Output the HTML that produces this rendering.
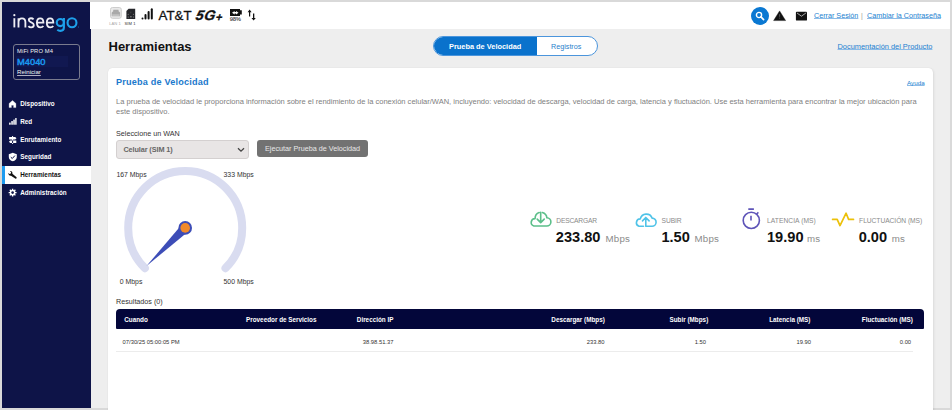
<!DOCTYPE html>
<html><head><meta charset="utf-8">
<style>
*{margin:0;padding:0;box-sizing:border-box}
html,body{width:952px;height:410px;overflow:hidden}
body{background:#d9d9d9;font-family:"Liberation Sans",sans-serif;position:relative}
.a{position:absolute;white-space:nowrap}
#frame{position:absolute;left:2px;top:2px;width:948px;height:406px;background:#eeeeee;overflow:hidden}
#side{position:absolute;left:2px;top:2px;width:88.5px;height:406px;background:#0e1448}
#hdr{position:absolute;left:90px;top:2px;width:860px;height:26.5px;background:#fff}
.nt{left:20.2px;color:#fff;font-weight:bold;font-size:6.3px;line-height:9px;letter-spacing:0.05px}
.lnk{color:#1a7fd0;text-decoration:underline;text-decoration-thickness:1px;text-decoration-color:#8cbce8;text-decoration-skip-ink:none;text-underline-offset:0.4px;font-size:7.2px}
#card{position:absolute;left:108px;top:68px;width:825px;height:360px;background:#fff;border-radius:4.5px;box-shadow:0 0 1px rgba(0,0,0,.12),1px 1px 3px rgba(0,0,0,.07)}
.lbl{color:#8a8a8a;font-size:6.7px;letter-spacing:0px}
.val{color:#111;font-weight:bold;font-size:14.6px}
.unit{color:#8a8a8a;font-size:9.7px;letter-spacing:0.25px}
.th{color:#fff;font-weight:bold;font-size:6.35px;line-height:10px}
.td{color:#333;font-size:5.8px;line-height:10px}
</style></head>
<body>
<div id="frame"></div>
<div id="side"></div>
<div id="hdr"></div>

<!-- logo -->
<svg class="a" style="left:0;top:0" width="90" height="40" viewBox="0 0 90 40">
 <g fill="none" stroke="#ededf3" stroke-width="1.85" stroke-linecap="butt">
  <path d="M14.35 18.2V27.4"/>
  <path d="M18.5 27.4V18.2 M18.5 22.3C18.5 19.6 20 18.3 22 18.3C24 18.3 25.4 19.6 25.4 22.3V27.4"/>
  <path d="M33.6 19.3C32.9 18.6 32 18.2 31 18.2C29.6 18.2 28.8 19 28.8 20.1C28.8 22.8 33.8 22 33.8 24.9C33.8 26.3 32.8 27.3 31.1 27.3C30 27.3 29 26.8 28.4 26.1"/>
  <path d="M37 22.6H43.4C43.4 20 42.2 18.3 40.2 18.3C38.2 18.3 36.9 20.1 36.9 22.7C36.9 25.4 38.4 27.3 40.6 27.3C41.8 27.3 42.7 26.8 43.4 26"/>
  <path d="M46.9 22.6H53.3C53.3 20 52.1 18.3 50.1 18.3C48.1 18.3 46.8 20.1 46.8 22.7C46.8 25.4 48.3 27.3 50.5 27.3C51.7 27.3 52.6 26.8 53.3 26"/>
 </g>
 <circle cx="14.35" cy="15.2" r="1.1" fill="#ededf3"/>
 <g fill="none" stroke="#1ea0ea" stroke-width="2.1">
  <circle cx="60.3" cy="22.6" r="3.55"/>
  <path d="M63.9 18.1V27.6C63.9 29.9 62.6 30.9 60.4 30.9C59.1 30.9 58.1 30.5 57.3 29.8"/>
  <circle cx="72" cy="22.75" r="4.45"/>
 </g>
 <circle cx="78.6" cy="27" r="0.45" fill="#1ea0ea"/>
</svg>
<!-- device box -->
<div class="a" style="left:12.5px;top:44.3px;width:67.5px;height:35.4px;border:1.3px solid #7a7b8e;border-radius:3px"></div>
<div class="a" style="left:17.1px;top:47.1px;font-size:5.8px;line-height:8px;color:#f2f2f2;letter-spacing:0.1px">MiFi PRO M4</div>
<div class="a" style="left:16px;top:56.1px;width:51.6px;height:11.3px;background:#111851"></div>
<div class="a" style="left:17.1px;top:55.7px;font-size:9.3px;line-height:12px;color:#1a9af0;letter-spacing:0px;-webkit-text-stroke:0.42px #1a9af0">M4040</div>
<div class="a" style="left:17.1px;top:68.3px;font-size:6.1px;line-height:8px;color:#f2f2f2;text-decoration:underline;text-decoration-color:#b0b0c0;text-decoration-thickness:0.6px;text-underline-offset:1px">Reiniciar</div>

<!-- nav -->
<div class="a" style="left:2px;top:165.7px;width:88.5px;height:17.9px;background:#fff"></div>
<div class="a" style="left:2px;top:165.7px;width:3px;height:17.9px;background:#1e9bf0"></div>
<svg class="a" style="left:0;top:90px" width="22" height="110" viewBox="0 90 22 110">
 <path d="M12.5 100.5L9.1 103.4V107.6H11.4V105.2H13.6V107.6H15.9V103.4Z" fill="#fff" stroke="#fff" stroke-width="0.3" stroke-linejoin="round"/>
 <g fill="#fff"><rect x="9.1" y="122.6" width="1.6" height="2.1" rx="0.5"/><rect x="11.3" y="121" width="1.5" height="3.7" rx="0.5"/><rect x="13.3" y="119.4" width="1.5" height="5.3" rx="0.5"/><rect x="15.2" y="117.9" width="1.4" height="6.8" rx="0.5"/></g>
 <path d="M12.1 135.9H13.1V144H12.1Z M9.1 137H15.2L16.5 138.25L15.2 139.5H9.1Z M16.3 140.5H10.2L8.9 141.75L10.2 143H16.3Z" fill="#fff"/>
 <path d="M12.8 152.7L8.8 154.2V157C8.8 159.1 10.5 160.7 12.8 161.3C15.1 160.7 16.8 159.1 16.8 157V154.2Z" fill="#fff"/>
 <path d="M10.8 157.2L12.3 158.5L14.9 155.6" stroke="#0e1448" stroke-width="1" fill="none"/>
 <path d="M8.3 173.1C8.1 174.6 9.4 176 11 175.7L15.2 178.6C15.7 178.9 16.3 178.8 16.6 178.3C16.9 177.8 16.8 177.3 16.3 176.9L12.4 173.7C12.8 172.1 11.5 170.7 9.9 171L11.2 172.4L10.8 173.6L9.6 173.9Z" fill="#111"/>
 <path d="M16.54 191.91 L16.54 193.29 L15.42 193.28 L15.07 194.12 L15.87 194.90 L14.90 195.87 L14.12 195.07 L13.28 195.42 L13.29 196.54 L11.91 196.54 L11.92 195.42 L11.08 195.07 L10.30 195.87 L9.33 194.90 L10.13 194.12 L9.78 193.28 L8.66 193.29 L8.66 191.91 L9.78 191.92 L10.13 191.08 L9.33 190.30 L10.30 189.33 L11.08 190.13 L11.92 189.78 L11.91 188.66 L13.29 188.66 L13.28 189.78 L14.12 190.13 L14.90 189.33 L15.87 190.30 L15.07 191.08 L15.42 191.92Z" fill="#fff"/>
 <circle cx="12.6" cy="192.6" r="1.3" fill="#0e1448"/>
</svg>
<div class="a nt" style="top:99.2px">Dispositivo</div>
<div class="a nt" style="top:116.9px">Red</div>
<div class="a nt" style="top:134.7px">Enrutamiento</div>
<div class="a nt" style="top:152.4px">Seguridad</div>
<div class="a nt" style="top:170.2px;color:#111">Herramientas</div>
<div class="a nt" style="top:187.9px">Administración</div>

<!-- header status -->
<svg class="a" style="left:100px;top:0" width="170" height="28" viewBox="100 0 170 28">
 <rect x="110.5" y="7.5" width="10.8" height="10.8" rx="2" fill="#e9e9e9" stroke="#cdcdcd" stroke-width="1"/>
 <path d="M111.7 16.3V12.6L113.2 11.3V10.3C113.2 9.9 113.5 9.8 113.8 9.8H118C118.3 9.8 118.6 9.9 118.6 10.3V11.3L120.1 12.6V16.3Z" fill="#a9a9a9"/>
 <rect x="112.2" y="14.7" width="7.4" height="0.7" fill="#e8e8e8"/>
 <path d="M128.6 8.8H135.2V19H126.4V11Z" fill="#25262b"/>
 <circle cx="128.2" cy="14.2" r="0.5" fill="#9a9a9a"/><circle cx="133.4" cy="14.2" r="0.5" fill="#9a9a9a"/>
 <circle cx="128.2" cy="17" r="0.5" fill="#9a9a9a"/><circle cx="133.4" cy="17" r="0.5" fill="#9a9a9a"/>
 <rect x="130.2" y="16.1" width="1.4" height="1.3" fill="#8a8a8a"/>
 <path d="M130.8 11.6V13.4" stroke="#666" stroke-width="0.5"/>
 <g stroke="#111" stroke-width="2" stroke-linecap="round">
  <path d="M142.5 18.6V18.4"/><path d="M145.5 18.6V15"/><path d="M148.6 18.6V12.1"/><path d="M151.8 18.6V9.3"/>
 </g>
 <path d="M230 8.9H240V10.2H241.8V14.4H240V16.1H230Z" fill="#111"/>
 <path d="M232 12.7L234.6 11V12H236V11L238.5 12.7L236 14.4V13.4H234.6V14.4Z" fill="#fff"/>
 <path d="M249.6 9.5L247.6 12.2H249V16.6H250.2V12.2H251.6Z M253.6 20.6L255.8 17.9H254.3V13.5H253V17.9H251.5Z" fill="#111"/>
</svg>
<div class="a" style="left:109.2px;top:20.5px;font-size:4.1px;line-height:5px;color:#a8a8a8;letter-spacing:0.05px">LAN 1</div>
<div class="a" style="left:124.5px;top:20.5px;font-size:4.1px;line-height:5px;color:#333;letter-spacing:0.1px">SIM 1</div>
<div class="a" style="left:158.6px;top:7.5px;font-size:13.3px;line-height:16px;color:#111;-webkit-text-stroke:0.3px #111">AT&amp;T</div>
<div class="a" style="left:194.2px;top:7.3px;font-size:14px;line-height:16px;color:#111;font-weight:bold;font-style:italic;letter-spacing:0.7px;transform:skewX(-13deg);transform-origin:0 100%;-webkit-text-stroke:0.35px #111">5G<span style="font-size:11px;position:relative;top:1.2px;margin-left:0.3px">+</span></div>
<div class="a" style="left:229.8px;top:16px;font-size:5.9px;line-height:7px;color:#555;font-weight:bold;letter-spacing:-0.35px">98%</div>
<!-- header right -->
<div class="a" style="left:751px;top:7px;width:18px;height:18px;border-radius:50%;background:#0a78d2"></div>
<svg class="a" style="left:755px;top:11px" width="10" height="10" viewBox="0 0 10 10"><circle cx="4" cy="4" r="2.6" stroke="#fff" stroke-width="1.4" fill="none"/><path d="M5.9 5.9L8.6 8.6" stroke="#fff" stroke-width="1.6" stroke-linecap="round"/></svg>
<svg class="a" style="left:770px;top:8px" width="42" height="16" viewBox="770 8 42 16"><path d="M779.6 10.9L785.6 20.6H773.6Z" fill="#111" stroke="#111" stroke-width="0.4" stroke-linejoin="round"/><rect x="779.1" y="14.2" width="1" height="2.6" fill="#555"/><rect x="779.1" y="17.6" width="1" height="1" fill="#555"/><rect x="795.9" y="11.8" width="11.1" height="8.8" rx="0.9" fill="#111"/><path d="M797 13L801.45 16.2L805.9 13" stroke="#ccc" stroke-width="0.8" fill="none"/></svg>
<div class="a lnk" style="left:814px;top:11px;line-height:9px">Cerrar Sesión</div>
<div class="a" style="left:861px;top:11px;line-height:9px;font-size:7px;color:#999">|</div>
<div class="a lnk" style="left:867px;top:11px;line-height:9px">Cambiar la Contraseña</div>

<!-- page title -->
<div class="a" style="left:108.5px;top:39px;font-size:13px;line-height:16px;color:#111;font-weight:bold">Herramientas</div>
<!-- tabs -->
<div class="a" style="left:433.2px;top:36.1px;width:164.7px;height:20.2px;border:1px solid #4b95dc;border-radius:10.1px;background:#fff;overflow:hidden">
  <div style="position:absolute;left:-1px;top:-1px;width:104px;height:20.2px;background:#0a72cc"></div>
</div>
<div class="a" style="left:449px;top:41.5px;font-size:7.4px;line-height:9px;color:#fff;font-weight:bold">Prueba de Velocidad</div>
<div class="a" style="left:551px;top:41.5px;font-size:7.2px;line-height:9px;color:#2a7fcc">Registros</div>
<div class="a lnk" style="left:837.5px;top:41.5px;line-height:9px;font-size:7.4px">Documentación del Producto</div>

<!-- card -->
<div id="card"></div>
<div class="a" style="left:116px;top:75.6px;font-size:9.1px;line-height:12px;color:#1a78cc;font-weight:bold;letter-spacing:0.2px">Prueba de Velocidad</div>
<div class="a lnk" style="left:907px;top:78.5px;font-size:6.25px;line-height:7px">Ayuda</div>
<div class="a" style="left:116px;top:96.8px;font-size:7.53px;line-height:10.1px;color:#808080;white-space:normal;width:810px">La prueba de velocidad le proporciona información sobre el rendimiento de la conexión celular/WAN, incluyendo: velocidad de descarga, velocidad de carga, latencia y fluctuación. Use esta herramienta para encontrar la mejor ubicación para este dispositivo.</div>
<div class="a" style="left:116px;top:128.5px;font-size:7.2px;line-height:9px;color:#333">Seleccione un WAN</div>
<div class="a" style="left:116px;top:140px;width:133.4px;height:18.6px;background:#e8e5e5;border:1px solid #d4d0d0;border-radius:3px"></div>
<div class="a" style="left:123.4px;top:144.5px;font-size:7.3px;line-height:9px;color:#666;font-weight:bold;letter-spacing:-0.1px">Celular (SIM 1)</div>
<svg class="a" style="left:237px;top:146.5px" width="8" height="6" viewBox="0 0 8 6"><path d="M1 1.2L4 4.2L7 1.2" stroke="#444" stroke-width="1.3" fill="none"/></svg>
<div class="a" style="left:257.1px;top:139.8px;width:111.4px;height:17.7px;background:#727272;border-radius:3px"></div>
<div class="a" style="left:265px;top:144.2px;font-size:7.23px;line-height:9px;color:#e8e8e8">Ejecutar Prueba de Velocidad</div>

<!-- gauge -->
<svg class="a" style="left:110px;top:160px" width="150" height="130" viewBox="110 160 150 130">
  <path d="M144.9 268.2 A57 57 0 1 1 225.5 268.2" stroke="#d9dcf0" stroke-width="8" fill="none" stroke-linecap="round"/>
  <path d="M146.5 266 L182.3 224 L188.6 231.2 Z" fill="#3d4db7"/>
  <circle cx="185.2" cy="227.9" r="6.8" fill="#3d4db7"/>
  <circle cx="185.2" cy="227.9" r="4.8" fill="#f28a2a"/>
</svg>
<div class="a" style="left:116.4px;top:170px;font-size:6.9px;line-height:9px;color:#333">167 Mbps</div>
<div class="a" style="left:223.5px;top:170px;font-size:6.9px;line-height:9px;color:#333">333 Mbps</div>
<div class="a" style="left:119.8px;top:277px;font-size:6.9px;line-height:9px;color:#333">0 Mbps</div>
<div class="a" style="left:223.5px;top:277px;font-size:6.9px;line-height:9px;color:#333">500 Mbps</div>

<!-- stats -->
<svg class="a" style="left:520px;top:200px" width="40" height="35" viewBox="520 200 40 35"><path d="M542.4 212.5A6.2 6.2 0 0 1 546.9 217.8A4.1 4.1 0 0 1 546.7 226H533.8A3.8 3.8 0 0 1 535.1 218.6A6.2 6.2 0 0 1 539.2 212.6" stroke="#5cbf8a" stroke-width="1.6" fill="none" stroke-linecap="round" stroke-linejoin="round"/><path d="M540.7 212.3V222.3 M537.2 219.1L540.7 222.6L544.2 219.1" stroke="#5cbf8a" stroke-width="1.6" fill="none" stroke-linecap="round" stroke-linejoin="round"/></svg>
<div class="a lbl" style="left:556.3px;top:216px;line-height:9px;letter-spacing:-0.2px">DESCARGAR</div>
<div class="a val" style="left:555.8px;top:228px;line-height:18px">233.80</div>
<div class="a unit" style="left:605.5px;top:232px;line-height:14px">Mbps</div>
<svg class="a" style="left:625px;top:200px" width="40" height="35" viewBox="625 200 40 35"><path d="M643.5 226.3H639A3.8 3.8 0 0 1 640.3 218.9A6.2 6.2 0 0 1 652.1 218.1A4.1 4.1 0 0 1 651.9 226.3H646.4" stroke="#4fc3e8" stroke-width="1.6" fill="none" stroke-linecap="round" stroke-linejoin="round"/><path d="M645.8 226.3V217.6 M642.5 220.9L645.8 217.5L649.1 220.9" stroke="#4fc3e8" stroke-width="1.6" fill="none" stroke-linecap="round" stroke-linejoin="round"/></svg>
<div class="a lbl" style="left:661.6px;top:216px;line-height:9px;letter-spacing:-0.1px">SUBIR</div>
<div class="a val" style="left:661.4px;top:228px;line-height:18px">1.50</div>
<div class="a unit" style="left:694.5px;top:232px;line-height:14px">Mbps</div>
<svg class="a" style="left:735px;top:200px" width="30" height="35" viewBox="735 200 30 35"><circle cx="751.3" cy="220.4" r="8.1" stroke="#5e54b8" stroke-width="1.6" fill="none"/><path d="M748.3 209.1H753.9 M751 215.8V220.4 M756.6 214L758.4 212.4" stroke="#5e54b8" stroke-width="1.6" fill="none" stroke-linecap="butt"/></svg>
<div class="a lbl" style="left:767px;top:216px;line-height:9px;letter-spacing:0.05px">LATENCIA (MS)</div>
<div class="a val" style="left:767px;top:228px;line-height:18px">19.90</div>
<div class="a unit" style="left:807px;top:232px;line-height:14px">ms</div>
<svg class="a" style="left:825px;top:205px" width="35" height="28" viewBox="825 205 35 28"><path d="M832.6 219.4H837.2L840 225.6L846.1 213.2L848.6 219.4H853.5" stroke="#ecc10a" stroke-width="1.7" fill="none" stroke-linecap="round" stroke-linejoin="round"/></svg>
<div class="a lbl" style="left:859.1px;top:216px;line-height:9px;letter-spacing:-0.05px">FLUCTUACIÓN (MS)</div>
<div class="a val" style="left:858.7px;top:228px;line-height:18px">0.00</div>
<div class="a unit" style="left:891.8px;top:232px;line-height:14px">ms</div>

<!-- results -->
<div class="a" style="left:116px;top:297px;font-size:7.2px;line-height:9px;color:#333">Resultados (0)</div>
<div class="a" style="left:116px;top:308.8px;width:808.2px;height:20.4px;background:#03063a;border-radius:4px 4px 1px 1px"></div>
<div class="a th" style="left:124.2px;top:315px">Cuando</div>
<div class="a th" style="left:246px;top:315px">Proveedor de Servicios</div>
<div class="a th" style="left:356.8px;top:315px">Dirección IP</div>
<div class="a th" style="left:551.3px;top:315px">Descargar (Mbps)</div>
<div class="a th" style="left:669.5px;top:315px">Subir (Mbps)</div>
<div class="a th" style="left:769.2px;top:315px">Latencia (MS)</div>
<div class="a th" style="left:861.8px;top:315px">Fluctuación (MS)</div>
<div class="a td" style="left:122.6px;top:337px">07/30/25 05:00:05 PM</div>
<div class="a td" style="left:362.8px;top:337px">38.98.51.37</div>
<div class="a td" style="left:586.8px;top:337px">233.80</div>
<div class="a td" style="left:694.7px;top:337px">1.50</div>
<div class="a td" style="left:796.5px;top:337px">19.90</div>
<div class="a td" style="left:899.8px;top:337px">0.00</div>
<div class="a" style="left:116px;top:351px;width:796.5px;height:1px;background:#ececec"></div>
</body></html>
